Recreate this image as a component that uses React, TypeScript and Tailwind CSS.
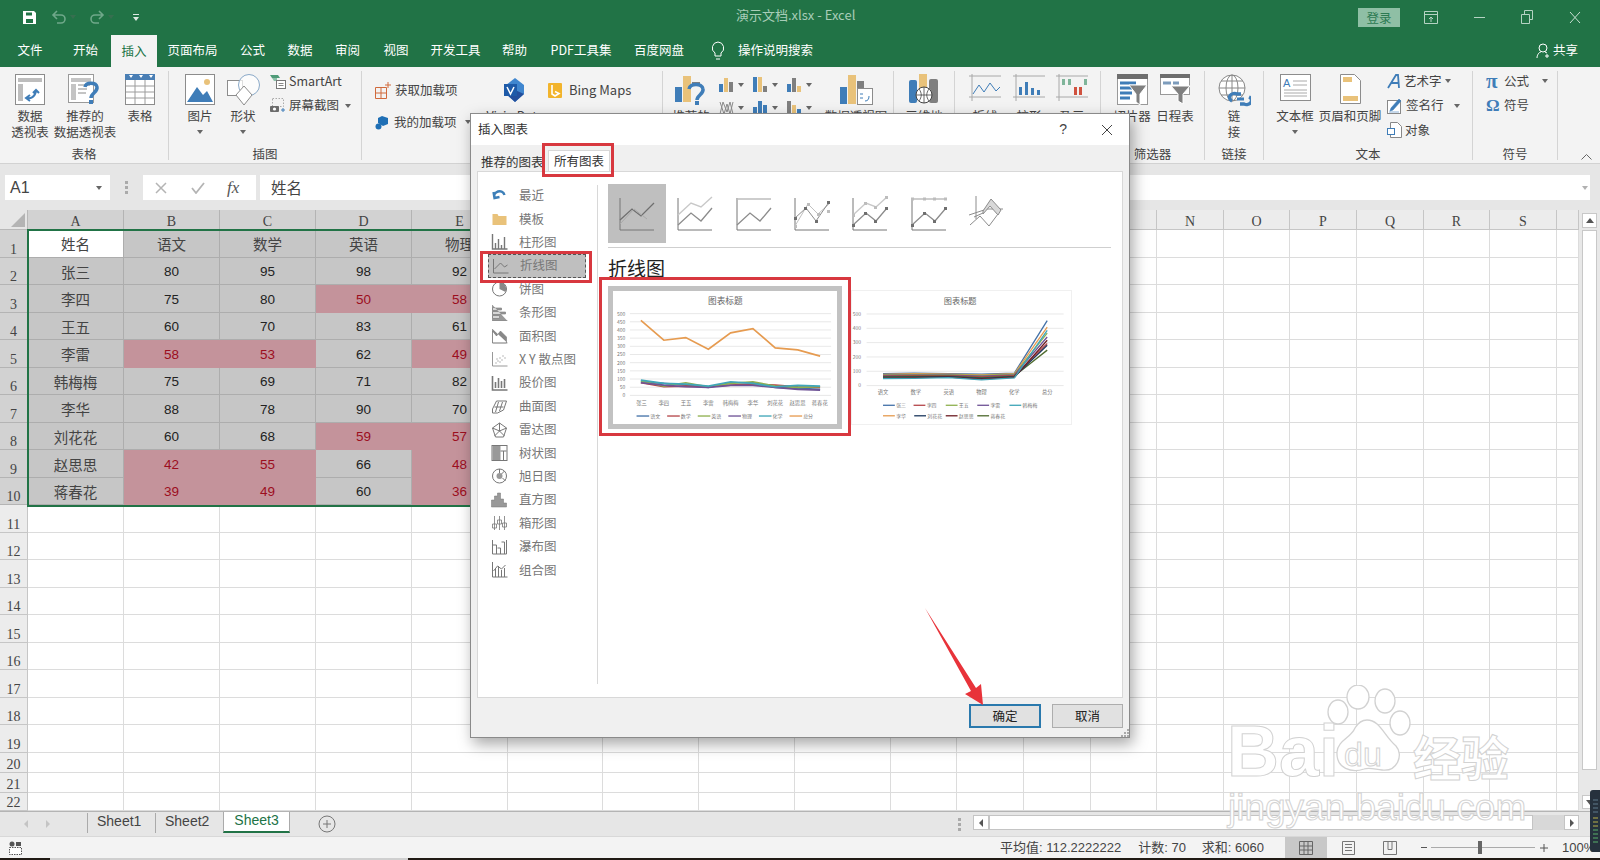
import type { ReactNode } from "react";

const BLUE = "#3f7db8";
const TAN = "#e9c27a";
const GRAY = "#7f7f7f";

const tabs = [
  { label: "文件", w: "w-[60px]" },
  { label: "开始", w: "w-[51px]" },
  { label: "插入", w: "w-[46px]", active: true },
  { label: "页面布局", w: "w-[71px]" },
  { label: "公式", w: "w-[49px]" },
  { label: "数据", w: "w-[46px]" },
  { label: "审阅", w: "w-[49px]" },
  { label: "视图", w: "w-[48px]" },
  { label: "开发工具", w: "w-[71px]" },
  { label: "帮助", w: "w-[47px]" },
  { label: "PDF工具集", w: "w-[86px]" },
  { label: "百度网盘", w: "w-[70px]" },
];

const sheetRows = [
  ["姓名", "语文", "数学", "英语", "物理"],
  ["张三", "80", "95", "98", "92"],
  ["李四", "75", "80", "50", "58"],
  ["王五", "60", "70", "83", "61"],
  ["李雷", "58", "53", "62", "49"],
  ["韩梅梅", "75", "69", "71", "82"],
  ["李华", "88", "78", "90", "70"],
  ["刘花花", "60", "68", "59", "57"],
  ["赵思思", "42", "55", "66", "48"],
  ["蒋春花", "39", "49", "60", "36"],
];

const colLetters = ["A", "B", "C", "D", "E", "F", "G", "H", "I", "J", "K", "L", "M", "N", "O", "P", "Q", "R", "S", ""];
const rowNumbers = Array.from({ length: 22 }, (_, i) => i + 1);

// small carets are everywhere on the ribbon
const Caret = ({ className = "" }: { className?: string }) => (
  <svg width="6" height="4" viewBox="0 0 6 4" className={className}>
    <path d="M0 0h6L3 4z" fill="#666" />
  </svg>
);

const BigButton = ({ w, icon, lines, caret }: { w: string; icon: ReactNode; lines: string[]; caret?: boolean }) => (
  <div className={`${w} flex flex-col items-center shrink-0`}>
    <div className="h-[37px] pt-[3px]">{icon}</div>
    {lines.map((l) => (
      <div key={l} className="h-[16px] leading-[16px] whitespace-nowrap">{l}</div>
    ))}
    {caret && <Caret className="mt-[6px]" />}
  </div>
);

const SmallRow = ({ icon, label, caret, gap = "gap-[3px]" }: { icon: ReactNode; label: string; caret?: ReactNode; gap?: string }) => (
  <div className={`h-[24.5px] flex items-center whitespace-nowrap ${gap}`}>
    {icon}
    <span>{label}</span>
    {caret}
  </div>
);

const Group = ({ w, label, children }: { w: string; label?: string; children: ReactNode }) => (
  <div className={`${w} h-[89px] flex flex-col shrink-0 border-r border-[#d4d4d4]`}>
    <div className="h-[77px] flex">{children}</div>
    <div className="h-[12px] leading-[12px] text-center whitespace-nowrap">{label}</div>
  </div>
);

/* ribbon icons */
const PivotIcon = () => (
  <svg width="30" height="31" viewBox="0 0 30 31">
    <rect x=".5" y=".5" width="29" height="30" fill="#fff" stroke="#8c8c8c" />
    <rect x="3" y="4" width="24" height="4" fill="#bdbdbd" />
    <rect x="3" y="10" width="5" height="17" fill="#bdbdbd" />
    <path d="M11 24c5 1 9-1 10-7M18 19l3-3 3 3M15 21l-4 3 4 3" fill="none" stroke={BLUE} strokeWidth="2" />
  </svg>
);
const RecommendPivotIcon = () => (
  <svg width="34" height="31" viewBox="0 0 34 31">
    <rect x=".5" y=".5" width="25" height="28" fill="#fff" stroke="#9a9a9a" />
    <rect x="3" y="4" width="20" height="4" fill="#c4c4c4" />
    <rect x="3" y="10" width="5" height="16" fill="#c4c4c4" />
    <path d="M10 11h12M10 15h9M10 19h8" stroke="#c4c4c4" strokeWidth="2" />
    <path d="M17 13c1-5 11-5 12 0 1 5-6 6-6 11" fill="none" stroke={BLUE} strokeWidth="3.5" />
    <rect x="21" y="26" width="4" height="4" fill={BLUE} />
  </svg>
);
const TableIcon = () => (
  <svg width="30" height="31" viewBox="0 0 30 31">
    <rect x=".5" y=".5" width="29" height="30" fill="#fff" stroke="#8c8c8c" />
    <rect width="30" height="6" fill="#4a7fb5" />
    <path d="M1 12h28M1 18h28M1 24h28M10 6v24M20 6v24" stroke="#9c9c9c" />
    <path d="M4 1l2 3 2-3zM14 1l2 3 2-3zM24 1l2 3 2-3z" fill="#fff" />
  </svg>
);
const PictureIcon = () => (
  <svg width="30" height="31" viewBox="0 0 30 31">
    <rect x=".5" y=".5" width="29" height="30" fill="#fff" stroke="#8c8c8c" />
    <circle cx="22" cy="8" r="3" fill={TAN} />
    <path d="M2 28l10-15 6 8 4-4 6 11z" fill={BLUE} />
  </svg>
);
const ShapeIcon = () => (
  <svg width="33" height="32" viewBox="0 0 33 32">
    <rect x=".5" y="6.5" width="15" height="15" fill="#fff" stroke="#8c8c8c" />
    <circle cx="22" cy="11" r="10.5" fill="#fff" fillOpacity=".7" stroke="#8aa9c8" />
    <path d="M17 12l8 9-8 10-8-10z" fill="#fff" stroke="#8c8c8c" />
  </svg>
);
const SmartArtIcon = () => (
  <svg width="16" height="15" viewBox="0 0 16 15">
    <path d="M0 1h8l2 3H2z" fill="#4f9b78" />
    <path d="M2 4h5v3H4z" fill="#8cbfa8" />
    <rect x="6.5" y="6.5" width="9" height="8" fill="#fff" stroke="#777" />
    <path d="M8.5 9.5h5M8.5 11.5h5" stroke="#888" />
  </svg>
);
const ScreenshotIcon = () => (
  <svg width="16" height="15" viewBox="0 0 16 15">
    <rect x="2.5" y=".5" width="11" height="8" fill="none" stroke="#aaa" strokeDasharray="1.5 1.5" />
    <rect x="0" y="8" width="9" height="6" rx="1" fill="#6b6b6b" />
    <circle cx="4.5" cy="11" r="1.6" fill="#fff" />
    <path d="M11 12h4M13 10v4" stroke={BLUE} />
  </svg>
);
const StoreIcon = () => (
  <svg width="16" height="17" viewBox="0 0 16 17">
    <path d="M.5 5.5h11v11H.5zM6 5.5v11M.5 11h11" fill="none" stroke="#d06a3c" />
    <path d="M13 0v6M10 3h6" stroke="#d06a3c" />
  </svg>
);
const MyAddinIcon = () => (
  <svg width="15" height="15" viewBox="0 0 15 15">
    <path d="M7 1l6 2v6l-5 2-5-3V3z" fill="#1f6fb5" />
    <circle cx="3.5" cy="11.5" r="3" fill="#1f6fb5" />
  </svg>
);
const VisioIcon = () => (
  <svg width="24" height="24" viewBox="0 0 24 24">
    <path d="M12 0l9 7v9l-9 8-9-8V7z" fill="#3f86cf" />
    <path d="M12 12l9 4-9 8-9-8z" fill="#234f9c" />
    <rect x="1" y="6" width="13" height="12" fill="#1d5aa8" />
    <path d="M4 9l3.5 7L11 9" fill="none" stroke="#fff" strokeWidth="1.5" />
  </svg>
);
const BingIcon = () => (
  <svg width="14" height="15" viewBox="0 0 14 15">
    <rect width="14" height="15" rx="1" fill="#f2b42c" />
    <path d="M4 2v9l3 2 4-2.5-4-2" fill="none" stroke="#fff" strokeWidth="1.6" />
  </svg>
);
const ChartRecommendIcon = () => (
  <svg width="32" height="31" viewBox="0 0 32 31">
    <rect x="0" y="13" width="7" height="15" fill={BLUE} />
    <rect x="8" y="2" width="8" height="26" fill={TAN} />
    <rect x="17" y="8" width="8" height="3" fill={GRAY} />
    <path d="M14 15c1-6 13-6 14 0 1 5-6 6-6 11" fill="none" stroke={BLUE} strokeWidth="3.5" />
    <rect x="20" y="27" width="4" height="4" fill={BLUE} />
  </svg>
);
const MiniBars = ({ colors, heights }: { colors: string[]; heights: number[] }) => (
  <svg width="15" height="15" viewBox="0 0 15 15">
    {heights.map((h, i) => (
      <rect key={i} x={i * 5} y={15 - h} width="4" height={h} fill={colors[i % colors.length]} />
    ))}
  </svg>
);
const PivotChartIcon = () => (
  <svg width="33" height="31" viewBox="0 0 33 31">
    <rect x="0" y="13" width="7" height="17" fill={BLUE} />
    <rect x="8" y="1" width="8" height="29" fill={TAN} />
    <rect x="17" y="7" width="7" height="10" fill={GRAY} />
    <rect x="17.5" y="14.5" width="15" height="16" fill="#fff" stroke="#8c8c8c" />
    <path d="M20 20h3M20 24h3M25 27c3 0 4-2 4-5" fill="none" stroke={BLUE} />
  </svg>
);
const MapIcon = () => (
  <svg width="30" height="31" viewBox="0 0 30 31">
    <rect x="0" y="6" width="8" height="23" rx="2" fill={BLUE} />
    <rect x="10" y="0" width="8" height="24" fill={TAN} />
    <rect x="20" y="5" width="9" height="24" rx="2" fill={GRAY} />
    <circle cx="15" cy="21" r="8" fill="#fff" stroke="#444" />
    <path d="M7 21h16M15 13v16M10 15c3 4 3 8 0 12M20 15c-3 4-3 8 0 12" fill="none" stroke="#444" strokeWidth=".8" />
  </svg>
);
const Sparkline = ({ children }: { children: ReactNode }) => (
  <svg width="32" height="27" viewBox="0 0 32 27">
    <path d="M0 2h32M0 23h32M3 0v27" stroke="#a8a8a8" />
    {children}
  </svg>
);
const SliceIcon = () => (
  <svg width="31" height="31" viewBox="0 0 31 31">
    <rect x=".5" y=".5" width="30" height="30" fill="#fff" stroke="#999" />
    <rect width="31" height="5" fill="#6e6e6e" />
    <path d="M3 9h16M3 14h14M3 19h12M3 24h10" stroke={BLUE} strokeWidth="3" />
    <path d="M12 11h18l-7 9v11l-4-3v-8z" fill="#7f7f7f" stroke="#fff" />
  </svg>
);
const TimelineIcon = () => (
  <svg width="30" height="30" viewBox="0 0 30 30">
    <rect x=".5" y=".5" width="29" height="20" fill="#fff" stroke="#999" />
    <rect width="30" height="4" fill="#6e6e6e" />
    <path d="M3 9h8M13 9h6" stroke="#7d9cbc" strokeWidth="3" />
    <path d="M11 12h19l-7 8v10l-5-3v-7z" fill="#7f7f7f" stroke="#fff" />
  </svg>
);
const GlobeIcon = () => (
  <svg width="33" height="33" viewBox="0 0 33 33">
    <circle cx="14" cy="14" r="13" fill="#fff" stroke="#888" />
    <ellipse cx="14" cy="14" rx="6" ry="13" fill="none" stroke="#888" />
    <path d="M1 14h26M3 7h22M3 21h22M14 1v26" stroke="#888" />
    <path d="M14 27a5 4 0 0 1 5-7h4M31 23a5 4 0 0 1-5 7h-4" fill="none" stroke={BLUE} strokeWidth="3.4" />
    <path d="M19 25h7" stroke={BLUE} strokeWidth="3" />
  </svg>
);
const TextBoxIcon = () => (
  <svg width="31" height="27" viewBox="0 0 31 27">
    <rect x=".5" y=".5" width="30" height="26" fill="#fff" stroke="#8c8c8c" />
    <path d="M13 7h14M13 11h14M4 16h23M4 19h23M4 22h23" stroke="#aaa" />
    <text x="3" y="13" fontSize="11" fill={BLUE} fontFamily="Liberation Sans">A</text>
  </svg>
);
const HeaderFooterIcon = () => (
  <svg width="21" height="30" viewBox="0 0 21 30">
    <path d="M.5.5h14l6 6v23H.5z" fill="#fff" stroke="#8c8c8c" />
    <rect x="3" y="3" width="9" height="5" fill={TAN} />
    <rect x="3" y="22" width="15" height="5" fill={TAN} />
  </svg>
);
const SignatureIcon = () => (
  <svg width="16" height="16" viewBox="0 0 16 16">
    <rect x=".5" y="2.5" width="13" height="13" fill="#fff" stroke="#888" />
    <path d="M3 13l1-3 8-9 2 2-8 9zM2 14h10" fill={BLUE} stroke={BLUE} strokeWidth=".6" />
  </svg>
);
const ObjectIcon = () => (
  <svg width="15" height="16" viewBox="0 0 15 16">
    <path d="M3.5.5h7l4 4v11h-11z" fill="#fff" stroke="#888" />
    <rect x=".5" y="6.5" width="7" height="6" fill="#fff" stroke={BLUE} />
  </svg>
);

/* chart list icons in the dialog */
const listIconPaths: ReactNode[] = [
  <path key="r" d="M3 10a5 5 0 0 1 10-3M2 4l1 6 5-1" fill="none" stroke="#3d7fb8" strokeWidth="2.4" />,
  <path key="f" d="M1 3h5l1 2h8v9H1z" fill={TAN} />,
  <path key="c" d="M1 0v15h15M4 15V9M7 15V5M10 15v-4M13 15V3" fill="none" stroke="#777" strokeWidth="1.4" />,
  <path key="l" d="M1 1v14h15M2 11l6-6 4 4 3-2" fill="none" stroke="#777" />,
  <g key="p"><circle cx="8" cy="8" r="7" fill="#fff" stroke="#777" /><path d="M8 8V1a7 7 0 0 1 6 10z" fill="#888" /></g>,
  <path key="b" d="M1 0v16h15M1 3h9v2H1zM1 7h13v2H1zM1 11h7v2H1z" fill="#999" stroke="#777" strokeWidth=".6" />,
  <path key="a" d="M1 1v14h15M1 12V3l4 5 4-5 6 6v6H1z" fill="#888" stroke="#777" strokeWidth=".6" />,
  <g key="x"><path d="M1 1v14h15" fill="none" stroke="#999" /><path d="M4 12h1M6 10h1M8 11h1M8 7h1M10 9h1M11 5h1M13 7h1M5 8h1" stroke="#777" /></g>,
  <path key="s" d="M1 1v14h15M4 13V7M7 13V3M10 13V6M13 13V4" fill="none" stroke="#777" strokeWidth="1.6" />,
  <path key="u" d="M1 11l4-8h10l-3 9-6 3H1zM3 9h9M7 4l-3 10M11 4l-3 9" fill="#fff" stroke="#777" />,
  <path key="d" d="M8 1l7 5-3 9H4L1 6zM8 1v8l5 5M8 9l-5 5M1 6l7 3 7-3" fill="none" stroke="#777" />,
  <g key="t"><rect x=".5" y=".5" width="15" height="15" fill="#fff" stroke="#777" /><rect x="1" y="1" width="8" height="14" fill="#999" /><path d="M9 6h6M12 6v9" stroke="#777" /></g>,
  <g key="o"><circle cx="8" cy="8" r="7" fill="#fff" stroke="#777" /><circle cx="8" cy="8" r="3" fill="#999" /><path d="M8 1v4M13 3l-3 3M11 10l3 3" stroke="#777" /></g>,
  <path key="h" d="M0 15V8h3V4h3V1h3v6h3v4h3v4z" fill="#999" stroke="#777" strokeWidth=".5" />,
  <path key="bx" d="M3 1v14M8 1v14M13 1v14M1 9h4v4H1zM6 5h4v4H6zM11 8h4v4h-4z" fill="#fff" stroke="#777" strokeWidth=".8" />,
  <path key="w" d="M1 1v14h14M1 6h4v9M6 9h3v6M10 3h3v12M15 1v14" fill="#fff" stroke="#777" />,
  <path key="cb" d="M1 0v15h15M4 15V7M7 15V4M10 15V8M13 15V6M2 9l4-5 4 3 4-4" fill="none" stroke="#777" />,
];
const listItems = ["最近", "模板", "柱形图", "折线图", "饼图", "条形图", "面积图", "X Y 散点图", "股价图", "曲面图", "雷达图", "树状图", "旭日图", "直方图", "箱形图", "瀑布图", "组合图"];

/* the row of line-chart sub types */
const LineTypeIcon = ({ v }: { v: number }) => (
  <svg width="36" height="36" viewBox="0 0 36 36">
    {v < 6 && <path d="M1 2v32h34" fill="none" stroke="#777" />}
    {v === 0 && <path d="M1 24l12-11 9 7 13-13" fill="none" stroke="#6f6f6f" strokeWidth="1.3" />}
    {v === 0 && <path d="M1 28l14-15 13 10" fill="none" stroke="#a9a9a9" />}
    {(v === 1 || v === 4) && <path d="M1 19l13-12 10 4 11-10" fill="none" stroke="#c8c8c8" strokeWidth="1.4" />}
    {(v === 1 || v === 4) && <path d="M1 29l13-12 10 8 11-13" fill="none" stroke="#8c8c8c" strokeWidth="1.3" />}
    {(v === 2 || v === 5) && <path d="M1 3h34" stroke="#bdbdbd" strokeWidth="1.5" />}
    {(v === 2 || v === 5) && <path d="M1 29l13-12 10 8 11-13" fill="none" stroke="#8c8c8c" strokeWidth="1.3" />}
    {v === 3 && <path d="M1 30l13-22 10 10 11-10" fill="none" stroke="#c0c0c0" />}
    {v === 3 && <path d="M1 22l11-10 10 13 13-19" fill="none" stroke="#8c8c8c" />}
    {v === 3 && (
      <path d="M0 21h3v3H0zM10 11h3v3h-3zM21 24h3v3h-3zM33 5h3v3h-3z" fill="#6f6f6f" />
    )}
    {v === 3 && <path d="M0 29h3v3H0zM13 7h3v3h-3zM23 17h3v3h-3zM33 14h3v3h-3z" fill="#bdbdbd" />}
    {v === 4 && <path d="M0 28h3v3H0zM12 16h3v3h-3zM22 24h3v3h-3zM33 11h3v3h-3z" fill="#6f6f6f" />}
    {v === 4 && <path d="M0 18h3v3H0zM12 6h3v3h-3zM22 10h3v3h-3zM33 0h3v3h-3z" fill="#bdbdbd" />}
    {v === 5 && <path d="M0 28h3v3H0zM12 16h3v3h-3zM22 24h3v3h-3zM33 11h3v3h-3z" fill="#6f6f6f" />}
    {v === 5 && <path d="M0 1.500h3v3H0zM12 1.500h3v3h-3zM22 1.500h3v3h-3zM33 1.500h3v3h-3z" fill="#bdbdbd" />}
    {v === 6 && (
      <g fill="none" stroke="#8c8c8c">
        <path d="M7 0v23M0 19l18-6h16" />
        <path d="M1 29l10-9 9 10 9-12M5 21l9-4" />
        <path d="M14 15l8-12 10 11-3 5-8-9-7 8z" fill="#d8d8d8" />
      </g>
    )}
  </svg>
);

const orangeLine = "513,630 582,690 648,682 716,717 783,668 850,655 917,713 985,719 1052,738";
const seriesOne = [
  { c: "#4472a8", p: "513,815 582,820 648,825 716,832 783,818 850,818 917,832 985,835 1052,838" },
  { c: "#b5464a", p: "513,818 582,830 648,828 716,830 783,825 850,822 917,825 985,830 1052,832" },
  { c: "#8fb04f", p: "513,812 582,828 648,818 716,830 783,820 850,815 917,828 985,832 1052,830" },
  { c: "#6f5396", p: "513,818 582,825 648,830 716,832 783,826 850,826 917,832 985,838 1052,840" },
  { c: "#3fa6b8", p: "513,810 582,820 648,822 716,828 783,815 850,820 917,830 985,826 1052,828" },
];
const legendOne = [
  { c: "#4472a8", t: "语文" }, { c: "#b5464a", t: "数学" }, { c: "#8fb04f", t: "英语" },
  { c: "#6f5396", t: "物理" }, { c: "#3fa6b8", t: "化学" }, { c: "#e69b50", t: "总分" },
];
const namesOne = ["张三", "李四", "王五", "李雷", "韩梅梅", "李华", "刘花花", "赵思思", "蒋春花"];

const ChartByName = () => (
  <svg width="224" height="133" viewBox="430 542 672 400" className="font-['Noto_Sans_CJK_SC',sans-serif]">
    <text x="767" y="580" fontSize="26" textAnchor="middle" fill="#666">图表标题</text>
    {[0, 1, 2, 3, 4, 5, 6, 7, 8, 9, 10].map((i) => (
      <g key={i}>
        <path d={`M480 ${610 + i * 24.6}H1085`} stroke="#dcdcdc" strokeWidth="2" />
        <text x="466" y={616 + i * 24.6} fontSize="15" textAnchor="end" fill="#777">{500 - i * 50}</text>
      </g>
    ))}
    {seriesOne.map((s) => <polyline key={s.c} points={s.p} fill="none" stroke={s.c} strokeWidth="5" />)}
    <polyline points={orangeLine} fill="none" stroke="#e69b50" strokeWidth="5" />
    {namesOne.map((n, i) => (
      <text key={n} x={515 + i * 67} y={886} fontSize="16" textAnchor="middle" fill="#777">{n}</text>
    ))}
    {legendOne.map((l, i) => (
      <g key={l.t}>
        <path d={`M${500 + i * 92} 918h38`} stroke={l.c} strokeWidth="4" />
        <text x={541 + i * 92} y={923} fontSize="15" fill="#777">{l.t}</text>
      </g>
    ))}
  </svg>
);

const endY = [450, 470, 488, 500, 520, 540, 525, 510, 480];
const colorsTwo = ["#4472a8", "#e69b50", "#8fb04f", "#6f5396", "#b5464a", "#4f6b2f", "#1f3a5f", "#6e1f24", "#3fa6b8"];
const legendTwo = [
  { x: 125, y: 708, c: "#4472a8", t: "张三" }, { x: 218, y: 708, c: "#b5464a", t: "李四" },
  { x: 316, y: 708, c: "#8fb04f", t: "王五" }, { x: 412, y: 708, c: "#6f5396", t: "李雷" },
  { x: 510, y: 708, c: "#3fa6b8", t: "韩梅梅" }, { x: 125, y: 740, c: "#e69b50", t: "李华" },
  { x: 220, y: 740, c: "#1f3a5f", t: "刘花花" }, { x: 316, y: 740, c: "#6e1f24", t: "赵思思" },
  { x: 412, y: 740, c: "#4f6b2f", t: "蒋春花" },
];

const ChartBySubject = () => (
  <svg width="221" height="135" viewBox="33 360 662 405" className="font-['Noto_Sans_CJK_SC',sans-serif] border border-[#f0f0f0]">
    <text x="360" y="400" fontSize="25" textAnchor="middle" fill="#666">图表标题</text>
    {[0, 1, 2, 3, 4, 5].map((i) => (
      <g key={i}>
        <path d={`M75 ${430 + i * 43.6}H675`} stroke="#dcdcdc" strokeWidth="2" />
        <text x="58" y={435 + i * 43.6} fontSize="15" textAnchor="end" fill="#777">{500 - i * 100}</text>
      </g>
    ))}
    {colorsTwo.map((c, i) => (
      <polyline
        key={c}
        points={`125,${612 + i * 1.8} 220,${610 + i * 2} 325,${612 + i * 1.5} 425,${613 + i * 2.2} 525,${610 + i * 1.8} 625,${endY[i]}`}
        fill="none"
        stroke={c}
        strokeWidth="4"
      />
    ))}
    {["语文", "数学", "英语", "物理", "化学", "总分"].map((t, i) => (
      <text key={t} x={125 + i * 100} y={675} fontSize="16" textAnchor="middle" fill="#777">{t}</text>
    ))}
    {legendTwo.map((l) => (
      <g key={l.t}>
        <path d={`M${l.x} ${l.y}h36`} stroke={l.c} strokeWidth="4" />
        <text x={l.x + 40} y={l.y + 6} fontSize="15" fill="#777">{l.t}</text>
      </g>
    ))}
  </svg>
);

const Dialog = () => (
  <div className="absolute left-[470px] top-[113px] w-[660px] h-[625px] bg-[#f0f0f0] border border-[#8a8a8a] shadow-[3px_6px_14px_rgba(0,0,0,0.35)] flex flex-col text-[12.5px] text-[#333]">
    <div className="h-[31px] bg-white flex items-center pl-[7px] shrink-0">
      <span>插入图表</span>
      <span className="ml-auto text-[14px] font-['Liberation_Sans',sans-serif] text-[#444]">?</span>
      <svg width="12" height="12" viewBox="0 0 12 12" className="ml-[34px] mr-[16px]">
        <path d="M1 1l10 10M11 1L1 11" stroke="#444" />
      </svg>
    </div>
    <div className="h-[26px] flex items-end pl-[10px] shrink-0">
      <span className="h-[18px] leading-[18px] w-[67px] whitespace-nowrap">推荐的图表</span>
      <span className="h-[21px] leading-[20px] w-[62px] bg-white border border-b-0 border-[#d8d8d8] text-center">所有图表</span>
    </div>
    <div className="h-[527px] mx-[6px] bg-white border border-[#d8d8d8] flex shrink-0">
      <div className="w-[119px] pt-[12px] pl-[10px] pr-[11px] shrink-0">
        {listItems.map((t, i) => (
          <div
            key={t}
            className={`h-[23.4px] flex items-center gap-[11px] text-[#777] ${i === 3 ? "bg-[#bfbfbf] border border-dashed border-[#555] text-[#444]" : ""}`}
          >
            <svg width="17" height="16" viewBox="0 0 16 16" className="ml-[3px] shrink-0">{listIconPaths[i]}</svg>
            <span className="whitespace-nowrap">{t}</span>
          </div>
        ))}
      </div>
      <div className="w-px my-[13px] bg-[#d8d8d8] shrink-0" />
      <div className="flex-1 pl-[10px] pt-[12px] pr-[11px]">
        <div className="h-[64px] flex border-b border-[#cfcfcf]">
          {[0, 1, 2, 3, 4, 5, 6].map((v) => (
            <div key={v} className={`w-[58.300px] h-[59px] flex items-center justify-center ${v === 0 ? "bg-[#bfbfbf]" : ""}`}>
              <LineTypeIcon v={v} />
            </div>
          ))}
        </div>
        <div className="h-[28px] mt-[6px] text-[19px] leading-[28px] text-[#222]">折线图</div>
        <div className="flex mt-[4px] items-start">
          <div className="w-[234px] h-[143px] border-[5px] border-[#c2c2c2] flex items-center justify-center shrink-0">
            <ChartByName />
          </div>
          <div className="ml-[9px] mt-[4px]"><ChartBySubject /></div>
        </div>
      </div>
    </div>
    <div className="flex-1 flex items-start justify-end gap-[11px] pt-[6px] pr-[6px] relative">
      <button className="w-[72px] h-[24px] bg-[#e1e1e1] border-2 border-[#2a79ad] text-[#222]">确定</button>
      <button className="w-[71px] h-[24px] bg-[#e1e1e1] border border-[#adadad] text-[#222]">取消</button>
      <svg width="9" height="9" viewBox="0 0 9 9" className="absolute right-0 bottom-0">
        <path d="M7 1h2v2H7zM4 4h2v2H4zM7 4h2v2H7zM1 7h2v2H1zM4 7h2v2H4zM7 7h2v2H7z" fill="#aaa" />
      </svg>
    </div>
    {/* red annotation boxes */}
    <div className="absolute left-[71px] top-[29px] w-[72px] h-[34px] border-[3px] border-[#d8383f]" />
    <div className="absolute left-[9px] top-[137px] w-[112px] h-[32px] border-[3px] border-[#d8383f]" />
    <div className="absolute left-[128px] top-[163px] w-[252px] h-[159px] border-[3px] border-[#d8383f]" />
  </div>
);

const Watermark = () => (
  <div className="absolute left-[1225px] top-[685px] w-[300px] h-[145px] pointer-events-none font-['Liberation_Sans',sans-serif] text-white [-webkit-text-stroke:1px_#d2d2d2]">
    <span className="absolute left-[2px] top-[30px] text-[72px] leading-[72px] font-bold">Bai</span>
    <svg width="100" height="95" viewBox="0 0 100 95" className="absolute left-[97px] top-0">
      <g fill="#fff" stroke="#d2d2d2" strokeWidth="1.300">
        <ellipse cx="16" cy="27" rx="10" ry="12" />
        <ellipse cx="36" cy="12" rx="11" ry="12" />
        <ellipse cx="63" cy="16" rx="10" ry="12" />
        <ellipse cx="78" cy="38" rx="10" ry="12" />
        <path d="M45 35c13 0 17 16 29 26 8 9 1 26-14 24-8-1-13-3-18-1-12 4-28 0-27-17 1-12 14-14 18-24 3-5 7-8 12-8z" />
      </g>
    </svg>
    <span className="absolute left-[119px] top-[52px] text-[34px] leading-[34px]">du</span>
    <span className="absolute left-[188px] top-[42px] text-[48px] leading-[56px] font-['Noto_Sans_CJK_SC',sans-serif] font-bold">经验</span>
    <span className="absolute left-[3px] top-[101px] text-[37px] leading-[44px]">jingyan.baidu.com</span>
  </div>
);

const SheetGrid = () => (
  <div className="relative flex-1 bg-white overflow-hidden">
    <div className="grid grid-cols-[28px_96px_96px_96px_96px_96px_95px_96px_96px_96px_66px_67px_67px_66px_67px_66px_67px_67px_66px_67px_22px] grid-rows-[20px_repeat(19,27.53px)_20px_20px_18px]">
      {/* header row */}
      <div className="bg-[#e6e6e6] border-r border-b border-[#b8b8b8] flex items-end justify-end p-[2px]">
        <svg width="14" height="14" viewBox="0 0 14 14"><path d="M14 0v14H0z" fill="#b4b4b4" /></svg>
      </div>
      {colLetters.map((l, i) => (
        <div
          key={i}
          className={`border-r border-b flex items-center justify-center pt-[3px] text-[14px] font-['Liberation_Serif',serif] text-[#444] ${i < 9 ? "bg-[#d2d2d2] border-[#b4b4b4]" : "bg-[#ececec] border-[#c6c6c6]"}`}
        >
          {l}
        </div>
      ))}
      {rowNumbers.map((r) => {
        const row = sheetRows[r - 1];
        return (
          <div key={r} className="contents">
            <div
              className={`border-r border-b flex items-end justify-center text-[14px] leading-[15px] font-['Liberation_Serif',serif] text-[#444] ${r <= 10 ? "bg-[#d2d2d2] border-[#b4b4b4]" : "bg-[#ececec] border-[#c6c6c6]"}`}
            >
              {r}
            </div>
            {colLetters.map((_, c) => {
              const value = row && c < 5 ? row[c] : "";
              const selected = r <= 10 && c < 9;
              const low = r > 1 && c > 0 && value !== "" && Number(value) < 60;
              const first = r === 1 && c === 0;
              const isName = c === 0 || r === 1;
              return (
                <div
                  key={c}
                  className={`border-r border-b flex items-center justify-center ${isName ? "pt-[2px] text-[14.5px] font-['Noto_Sans_CJK_SC',sans-serif] text-[#444]" : "pt-[3px] text-[13.5px] font-['Liberation_Sans',sans-serif] text-[#222]"} ${
                    low
                      ? "bg-[#c4939b] border-[#c4939b] !text-[#9c0e1e]"
                      : first
                        ? "bg-white border-[#adadad]"
                        : selected
                          ? "bg-[#c6c6c6] border-[#adadad]"
                          : "bg-white border-[#dcdcdc]"
                  }`}
                >
                  {value}
                </div>
              );
            })}
          </div>
        );
      })}
    </div>
    {/* selection outline */}
    <div className="absolute left-[27px] top-[19px] w-[880px] h-[278px] border-2 border-[#217346] pointer-events-none" />
    {/* vertical scrollbar */}
    <div className="absolute right-0 top-0 bottom-0 w-[21px] bg-[#e8e8e8] flex flex-col items-center pt-[3px]">
      <div className="w-[15px] h-[15px] bg-white border border-[#c8c8c8] flex items-center justify-center">
        <svg width="8" height="5" viewBox="0 0 8 5"><path d="M4 0l4 5H0z" fill="#555" /></svg>
      </div>
      <div className="w-[15px] h-[540px] mt-[2px] bg-white border border-[#c8c8c8]" />
      <div className="w-[15px] h-[14px] mt-auto mb-[2px] bg-white border border-[#c8c8c8] flex items-center justify-center">
        <svg width="8" height="5" viewBox="0 0 8 5"><path d="M0 0h8L4 5z" fill="#555" /></svg>
      </div>
    </div>
  </div>
);

const App = () => {
  return (
    <div className="relative w-[1600px] h-[860px] overflow-hidden bg-[#e6e6e6] flex flex-col font-['Noto_Sans_CJK_SC',sans-serif] text-[12.5px] text-[#444]">
      {/* title bar */}
      <div className="h-[34px] bg-[#217346] flex items-center relative text-white shrink-0">
        <svg width="15" height="15" viewBox="0 0 15 15" className="ml-[22px]">
          <path d="M1 1h11l2 2v11H1z" fill="#fff" />
          <rect x="4" y="2.500" width="6" height="3" fill="#217346" />
          <rect x="4" y="9" width="7" height="4" fill="#217346" />
        </svg>
        <svg width="16" height="14" viewBox="0 0 16 14" className="ml-[14px]">
          <path d="M3 5h7a4 4 0 0 1 0 8H6M6 1L2 5l4 4" fill="none" stroke="#6fa88a" strokeWidth="1.6" />
        </svg>
        <Caret className="ml-[3px] opacity-30" />
        <svg width="16" height="14" viewBox="0 0 16 14" className="ml-[13px]">
          <path d="M13 5H6a4 4 0 0 0 0 8h4M10 1l4 4-4 4" fill="none" stroke="#6fa88a" strokeWidth="1.6" />
        </svg>
        <Caret className="ml-[3px] opacity-30" />
        <svg width="6" height="7" viewBox="0 0 6 7" className="ml-[19px]">
          <path d="M0 0h6v1H0zM0 3h6L3 7z" fill="#dce9e2" />
        </svg>
        <span className="absolute left-[736px] top-[5px] text-[13px] text-[#a8cdb8] whitespace-nowrap">演示文档.xlsx - Excel</span>
        <div className="ml-auto w-[42px] h-[19px] bg-[#8fbfa5] text-[#2c7a52] text-center leading-[19px]">登录</div>
        <svg width="14" height="13" viewBox="0 0 14 13" className="ml-[24px]">
          <path d="M.5.500h13v12H.5zM.5 3.500h13M7 11V6M5 8l2-2 2 2" fill="none" stroke="#b5d3c3" />
        </svg>
        <div className="ml-[36px] w-[11px] h-px bg-[#b5d3c3]" />
        <svg width="12" height="14" viewBox="0 0 12 14" className="ml-[36px]">
          <path d="M.5 4.500h8v9h-8zM3.500 4V.5h8v9H9" fill="none" stroke="#b5d3c3" />
        </svg>
        <svg width="12" height="13" viewBox="0 0 12 13" className="ml-[36px] mr-[19px]">
          <path d="M1 1l10 11M11 1L1 12" stroke="#c9e0d3" />
        </svg>
      </div>

      {/* ribbon tabs */}
      <div className="h-[33px] bg-[#217346] flex text-white shrink-0">
        {tabs.map((t) => (
          <div
            key={t.label}
            className={`${t.w} flex items-center justify-center whitespace-nowrap ${t.active ? "bg-[#f3f3f3] text-[#217346] mt-px" : ""}`}
          >
            {t.label}
          </div>
        ))}
        <svg width="14" height="19" viewBox="0 0 14 19" className="ml-[17px] self-center">
          <path d="M7 1a6 6 0 0 1 3 11v3H4v-3A6 6 0 0 1 7 1zM5 18h4" fill="none" stroke="#fff" />
        </svg>
        <span className="ml-[13px] self-center whitespace-nowrap">操作说明搜索</span>
        <svg width="15" height="16" viewBox="0 0 15 16" className="ml-auto self-center">
          <circle cx="7" cy="5" r="4" fill="none" stroke="#fff" />
          <path d="M1 15c0-3 2-6 4-6M9 9l2 1M11 11v4M9 13h4" fill="none" stroke="#fff" />
        </svg>
        <span className="ml-[2px] mr-[22px] self-center whitespace-nowrap">共享</span>
      </div>

      {/* ribbon */}
      <div className="h-[97px] bg-[#f3f3f3] border-b border-[#d2d2d2] pt-[4px] flex shrink-0 relative">
        <Group w="w-[169px]" label="表格">
          <BigButton w="w-[60px]" icon={<PivotIcon />} lines={["数据", "透视表"]} />
          <BigButton w="w-[50px]" icon={<RecommendPivotIcon />} lines={["推荐的", "数据透视表"]} />
          <BigButton w="w-[60px]" icon={<TableIcon />} lines={["表格"]} />
        </Group>
        <Group w="w-[193px]" label="插图">
          <BigButton w="w-[62px]" icon={<PictureIcon />} lines={["图片"]} caret />
          <BigButton w="w-[24px]" icon={<ShapeIcon />} lines={["形状"]} caret />
          <div className="ml-[15px] mt-[-2px] flex flex-col">
            <SmallRow icon={<SmartArtIcon />} label="SmartArt" />
            <SmallRow icon={<ScreenshotIcon />} label="屏幕截图" caret={<Caret className="ml-[3px]" />} />
          </div>
        </Group>
        <Group w="w-[301px]">
          <div className="ml-[13px] pt-[3px] flex flex-col w-[120px] shrink-0">
            <div className="h-[32px] flex items-center gap-[4px] whitespace-nowrap"><StoreIcon /><span>获取加载项</span></div>
            <div className="h-[32px] flex items-center gap-[4px] whitespace-nowrap"><MyAddinIcon /><span>我的加载项</span><Caret className="ml-[4px]" /></div>
          </div>
          <BigButton w="w-[40px]" icon={<div className="pt-[4px]"><VisioIcon /></div>} lines={["Visio Data"]} />
          <div className="ml-[13px] pt-[3px]">
            <div className="h-[32px] flex items-center gap-[7px] whitespace-nowrap text-[13px]"><BingIcon /><span>Bing Maps</span></div>
          </div>
        </Group>
        <Group w="w-[231px]">
          <BigButton w="w-[56px]" icon={<ChartRecommendIcon />} lines={["推荐的"]} />
          <div className="grid grid-cols-[34px_34px_34px] grid-rows-[23px_23px] mt-[2px]">
            <div className="flex items-center gap-[4px]"><MiniBars colors={[BLUE, TAN, GRAY]} heights={[8, 14, 10]} /><Caret /></div>
            <div className="flex items-center gap-[4px]"><MiniBars colors={[BLUE, TAN, GRAY]} heights={[15, 15, 6]} /><Caret /></div>
            <div className="flex items-center gap-[4px]"><MiniBars colors={[BLUE, GRAY, TAN]} heights={[8, 14, 6]} /><Caret /></div>
            <div className="flex items-center gap-[4px]">
              <svg width="15" height="15" viewBox="0 0 15 15"><path d="M1 14L4 2l4 10 3-10 3 12M1 2l4 12 3-10 3 10 3-12" fill="none" stroke="#8c8c8c" /></svg>
              <Caret />
            </div>
            <div className="flex items-center gap-[4px]"><MiniBars colors={[BLUE]} heights={[8, 14, 10]} /><Caret /></div>
            <div className="flex items-center gap-[4px]"><MiniBars colors={[GRAY, TAN, BLUE]} heights={[14, 10, 6]} /><Caret /></div>
          </div>
          <BigButton w="w-[70px]" icon={<PivotChartIcon />} lines={["数据透视图"]} />
        </Group>
        <Group w="w-[61px]">
          <BigButton w="w-[60px]" icon={<MapIcon />} lines={["三维地"]} />
        </Group>
        <Group w="w-[146px]">
          <BigButton w="w-[60px]" icon={<Sparkline><path d="M4 20l6-9 5 7 6-9 6 8 4-4" fill="none" stroke={BLUE} /></Sparkline>} lines={["折线"]} />
          <BigButton w="w-[28px]" icon={<Sparkline><path d="M6 21h3v-8H6zM12 21h3V8h-3zM18 21h3v-7h-3zM24 21h3v-5h-3z" fill={BLUE} /></Sparkline>} lines={["柱形"]} />
          <BigButton w="w-[58px]" icon={<Sparkline><path d="M6 5h3v6H6zM12 5h3v6h-3zM28 5h3v6h-3z" fill="#7fb59a" /><path d="M18 13h3v8h-3zM23 13h3v8h-3z" fill="#d0523f" /></Sparkline>} lines={["盈亏"]} />
        </Group>
        <Group w="w-[104px]" label="筛选器">
          <BigButton w="w-[62px]" icon={<SliceIcon />} lines={["切片器"]} />
          <BigButton w="w-[24px]" icon={<TimelineIcon />} lines={["日程表"]} />
        </Group>
        <Group w="w-[59px]" label="链接">
          <BigButton w="w-[58px]" icon={<GlobeIcon />} lines={["链", "接"]} />
        </Group>
        <Group w="w-[209px]" label="文本">
          <BigButton w="w-[62px]" icon={<TextBoxIcon />} lines={["文本框"]} caret />
          <BigButton w="w-[48px]" icon={<HeaderFooterIcon />} lines={["页眉和页脚"]} />
          <div className="ml-[13px] mt-[-2px] flex flex-col">
            <SmallRow icon={<svg width="14" height="15" viewBox="0 0 14 15"><path d="M1 14L9 1h2l1 13M4 9h8" fill="none" stroke={BLUE} strokeWidth="1.800" /></svg>} label="艺术字" caret={<Caret />} />
            <SmallRow icon={<SignatureIcon />} label="签名行" caret={<Caret className="ml-[7px]" />} />
            <SmallRow icon={<ObjectIcon />} label="对象" />
          </div>
        </Group>
        <Group w="w-[85px]" label="符号">
          <div className="ml-[13px] mt-[-2px] flex flex-col">
            <SmallRow gap="gap-[4px]" icon={<span className="w-[14px] text-[21px] leading-none text-[#3f7db8] font-['Liberation_Serif',serif] font-bold">π</span>} label="公式" caret={<Caret className="ml-[9px]" />} />
            <SmallRow gap="gap-[4px]" icon={<span className="w-[14px] text-[17px] leading-none text-[#3f7db8] font-['Liberation_Serif',serif] font-bold">Ω</span>} label="符号" />
          </div>
        </Group>
        <svg width="11" height="6" viewBox="0 0 11 6" className="absolute left-[1581px] top-[87px]">
          <path d="M.5 5.500l5-5 5 5" fill="none" stroke="#666" />
        </svg>
      </div>

      {/* formula bar */}
      <div className="h-[46px] flex items-center pl-[5px] pr-[10px] pt-[1px] shrink-0">
        <div className="w-[105px] h-[25px] bg-white flex items-center justify-between pl-[5px] pr-[8px] font-['Liberation_Sans',sans-serif] text-[16px]">
          A1<Caret />
        </div>
        <svg width="3" height="13" viewBox="0 0 3 13" className="ml-[15px]">
          <path d="M0 0h3v3H0zM0 5h3v3H0zM0 10h3v3H0z" fill="#aaa" />
        </svg>
        <div className="ml-[15px] w-[113px] h-[25px] bg-white flex items-center shrink-0">
          <svg width="12" height="12" viewBox="0 0 12 12" className="ml-[12px]"><path d="M1 1l10 10M11 1L1 11" stroke="#b4b4b4" strokeWidth="1.500" /></svg>
          <svg width="14" height="12" viewBox="0 0 14 12" className="ml-[24px]"><path d="M1 6l4 5 8-10" fill="none" stroke="#b4b4b4" strokeWidth="1.800" /></svg>
          <span className="ml-[22px] italic text-[17px] text-[#555] font-['Liberation_Serif',serif]">fx</span>
        </div>
        <div className="ml-[4px] flex-1 h-[25px] bg-white flex items-center pl-[11px] text-[15.5px] relative">
          姓名
          <Caret className="absolute right-[2px] top-[11px] opacity-50" />
        </div>
      </div>

      <SheetGrid />

      {/* sheet tabs */}
      <div className="h-[25px] bg-[#e6e6e6] border-t border-[#b4b4b4] flex items-stretch shrink-0 text-[14px] font-['Liberation_Sans',sans-serif]">
        <div className="w-[87px] flex items-center pl-[24px] gap-[18px] shrink-0">
          <svg width="4" height="8" viewBox="0 0 4 8"><path d="M4 0v8L0 4z" fill="#c4c4c4" /></svg>
          <svg width="4" height="8" viewBox="0 0 4 8"><path d="M0 0v8l4-4z" fill="#c4c4c4" /></svg>
        </div>
        <div className="w-[68px] my-[1px] border-l border-[#aaa] pl-[9px] h-[20px] leading-[17px] shrink-0">Sheet1</div>
        <div className="w-[68px] my-[1px] border-l border-[#aaa] pl-[9px] h-[20px] leading-[17px] shrink-0">Sheet2</div>
        <div className="w-[67px] h-[21px] bg-white border-x border-[#aaa] border-b-2 border-b-[#217346] text-center leading-[17px] text-[#217346] shrink-0">Sheet3</div>
        <svg width="18" height="18" viewBox="0 0 18 18" className="ml-[28px] self-center">
          <circle cx="9" cy="9" r="8" fill="none" stroke="#777" />
          <path d="M5 9h8M9 5v8" stroke="#777" />
        </svg>
        <svg width="3" height="13" viewBox="0 0 3 13" className="ml-[622px] self-center">
          <path d="M0 0h3v3H0zM0 5h3v3H0zM0 10h3v3H0z" fill="#aaa" />
        </svg>
        <div className="ml-[12px] w-[606px] h-[15px] mt-[3px] flex bg-[#d8d8d8] shrink-0">
          <div className="w-[16px] bg-white border border-[#c4c4c4] flex items-center justify-center">
            <svg width="4" height="8" viewBox="0 0 4 8"><path d="M4 0v8L0 4z" fill="#555" /></svg>
          </div>
          <div className="w-[544px] bg-white border border-[#c4c4c4]" />
          <div className="ml-auto w-[15px] bg-white border border-[#c4c4c4] flex items-center justify-center">
            <svg width="4" height="8" viewBox="0 0 4 8"><path d="M0 0v8l4-4z" fill="#555" /></svg>
          </div>
        </div>
      </div>

      {/* status bar */}
      <div className="h-[22px] bg-[#f3f3f3] border-t border-[#d8d8d8] flex items-center shrink-0 text-[13px] font-['Liberation_Sans','Noto_Sans_CJK_SC',sans-serif]">
        <svg width="13" height="14" viewBox="0 0 13 14" className="ml-[9px]">
          <circle cx="3" cy="3" r="2.500" fill="#555" />
          <rect x="7" y="1" width="5" height="4" fill="#555" />
          <rect x=".5" y="6.500" width="12" height="7" fill="#fff" stroke="#555" strokeDasharray="1.500 1" />
        </svg>
        <span className="ml-[978px] whitespace-nowrap">平均值: 112.2222222</span>
        <span className="ml-[17px] whitespace-nowrap">计数: 70</span>
        <span className="ml-[16px] whitespace-nowrap">求和: 6060</span>
        <div className="ml-[21px] w-[42px] h-full bg-[#c8c8c8] flex items-center justify-center">
          <svg width="14" height="14" viewBox="0 0 14 14"><path d="M.5.500h13v13H.5zM5 .5v13M9 .5v13M.5 5h13M.5 9h13" fill="none" stroke="#666" /></svg>
        </div>
        <svg width="13" height="14" viewBox="0 0 13 14" className="ml-[15px]"><path d="M.5.500h12v13H.5zM3 3.500h7M3 6.500h7M3 9.500h7" fill="none" stroke="#777" /></svg>
        <svg width="14" height="14" viewBox="0 0 14 14" className="ml-[28px]"><path d="M.5.500h13v13H.5zM5 .5v8h4v-8" fill="none" stroke="#777" /></svg>
        <div className="ml-[24px] w-[6px] h-px bg-[#555]" />
        <div className="ml-[4px] w-[104px] h-px bg-[#aaa] relative">
          <div className="absolute left-[47px] top-[-6px] w-[4px] h-[13px] bg-[#666]" />
        </div>
        <svg width="8" height="8" viewBox="0 0 8 8" className="ml-[5px]"><path d="M0 4h8M4 0v8" stroke="#555" /></svg>
        <span className="ml-[14px] whitespace-nowrap">100%</span>
      </div>

      <div className="h-[2px] flex shrink-0 bg-[#201a14]">
        <div className="w-[50px]" />
        <div className="w-[358px] bg-[#cfcfcf]" />
      </div>

      <Dialog />
      <Watermark />

      {/* arrow pointing at the OK button */}
      <svg width="70" height="105" viewBox="0 0 70 105" className="absolute left-[920px] top-[605px]">
        <path d="M5 3l51 80 5-4 2 21-18-11 6-3z" fill="#e8333a" />
      </svg>

      {/* level meter stuck to the right edge */}
      <svg width="10" height="62" viewBox="0 0 10 62" className="absolute left-[1590px] top-[790px]">
        <rect width="12" height="62" rx="3" fill="#26313d" />
        <path d="M3 10h5M3 14h5M3 18h5M3 22h5" stroke="#5f7a8c" />
        <path d="M3 28h5M3 32h5M3 36h5" stroke="#b8b04a" />
        <path d="M3 40h5M3 44h5M3 48h5M3 52h5" stroke="#58b06a" />
      </svg>
    </div>
  );
};

export default App;
